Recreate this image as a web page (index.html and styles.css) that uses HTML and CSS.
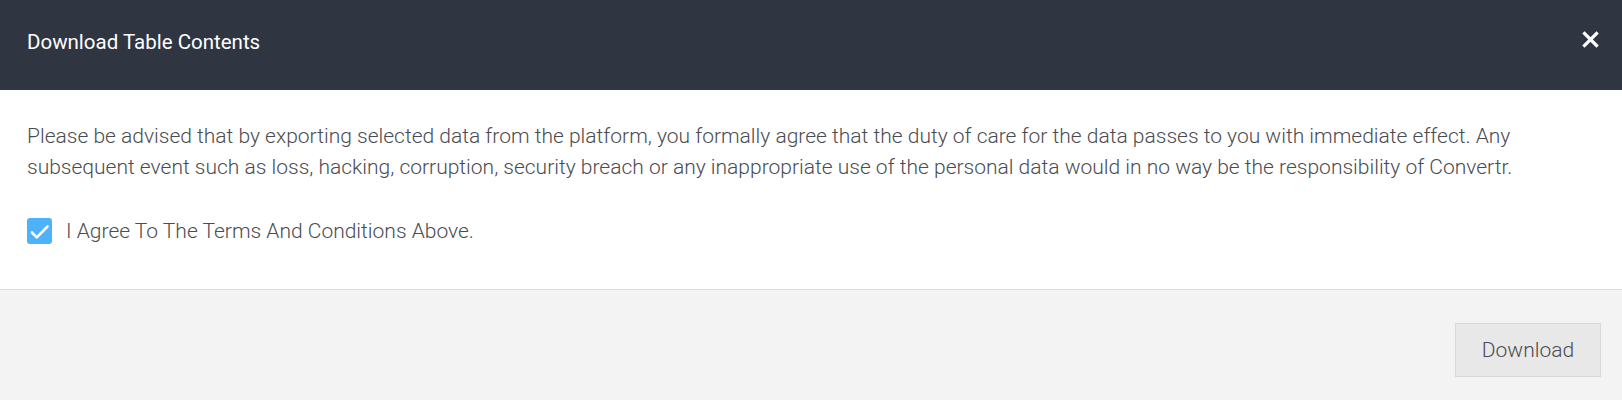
FILE: index.html
```html
<!DOCTYPE html>
<html lang="en">
<head>
<meta charset="utf-8">
<title>Download Table Contents</title>
<link rel="stylesheet" href="styles.css">
</head>
<body>
<div class="modal">
  <header class="modal-header">
    <h1 class="modal-title">Download Table Contents</h1>
    <button class="close-btn" aria-label="Close">
      <svg width="17" height="17" viewBox="0 0 17 17"><path d="M2.5 2.5 L14.5 14.5 M14.5 2.5 L2.5 14.5" stroke="#fff" stroke-width="3.2" stroke-linecap="square"/></svg>
    </button>
  </header>
  <section class="modal-body">
    <p class="notice">Please be advised that by exporting selected data from the platform, you formally agree that the duty of care for the data passes to you with immediate effect. Any subsequent event such as loss, hacking, corruption, security breach or any inappropriate use of the personal data would in no way be the responsibility of Convertr.</p>
    <label class="agree">
      <span class="checkbox">
        <svg width="25" height="26" viewBox="0 0 25 26"><path d="M5 14.5 L9.8 19.3 L20.5 8.5" fill="none" stroke="#fff" stroke-width="2.6" stroke-linecap="round" stroke-linejoin="round"/></svg>
      </span>
      <span class="agree-text">I Agree To The Terms And Conditions Above.</span>
    </label>
  </section>
  <footer class="modal-footer">
    <button class="download-btn">Download</button>
  </footer>
</div>
</body>
</html>
```

FILE: styles.css
```css
* { box-sizing: border-box; }
html, body {
  margin: 0;
  padding: 0;
  background: #ffffff;
  font-family: Roboto, "Liberation Sans", sans-serif;
}
.modal {
  width: 1622px;
  height: 400px;
  display: flex;
  flex-direction: column;
}
.modal-header {
  height: 90px;
  flex: none;
  background: #2f3541;
  display: flex;
  justify-content: space-between;
  align-items: flex-start;
  padding: 28px 23px 0 27px;
}
.modal-title {
  margin: 0;
  font-size: 20.5px;
  line-height: 28px;
  font-weight: 400;
  color: #ffffff;
}
.close-btn {
  background: none;
  border: 0;
  padding: 0;
  margin-top: 3px;
  width: 17px;
  height: 17px;
  display: flex;
  cursor: pointer;
}
.modal-body {
  flex: none;
  padding: 31px 27px 0 27px;
  height: 200px;
  border-bottom: 1px solid #dcdcdc;
}
.notice {
  margin: 0;
  font-size: 21px;
  line-height: 31px;
  font-weight: 300;
  color: #4a4c52;
}
.agree {
  display: flex;
  align-items: center;
  gap: 14px;
  margin-top: 35px;
}
.checkbox {
  flex: none;
  width: 25px;
  height: 26px;
  border-radius: 3px;
  background: #4db2fa;
  display: flex;
}
.agree-text {
  font-size: 21px;
  font-weight: 300;
  color: #4a4c52;
}
.modal-footer {
  flex: 1;
  background: #f3f3f3;
  display: flex;
  justify-content: flex-end;
  align-items: flex-start;
  padding: 33px 21px 0 0;
}
.download-btn {
  width: 146px;
  height: 54px;
  background: #e8e8e8;
  border: 1px solid #d8d8d8;
  font-family: Roboto, "Liberation Sans", sans-serif;
  font-size: 21px;
  font-weight: 300;
  color: #4a4c52;
  padding: 0;
  cursor: pointer;
}
```
